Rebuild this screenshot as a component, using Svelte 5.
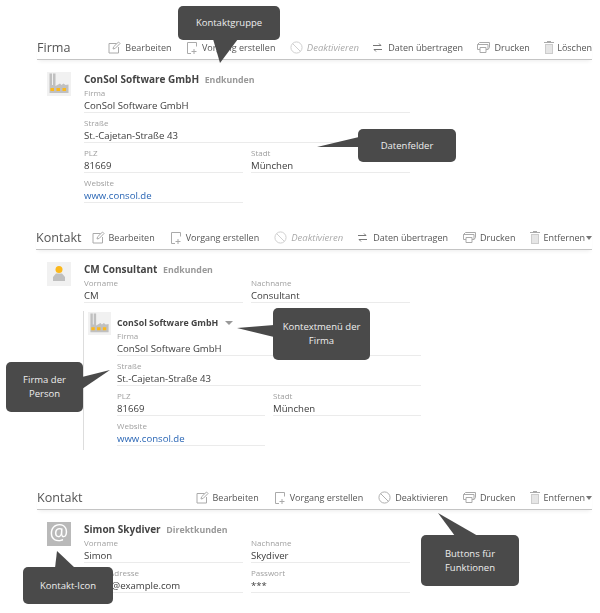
<script lang="ts">
  const callouts = [
    { text: "Kontaktgruppe", x: 178, y: 6, w: 102, h: 34, tip: "35,33 60,33 42,57" },
    { text: "Datenfelder", x: 358, y: 129, w: 98, h: 33, tip: "1,8 1,18 -41,18" },
    { text: "Kontextmenü der Firma", x: 273, y: 308, w: 97, h: 52, tip: "1,17 1,29 -36,20" },
    { text: "Firma der Person", x: 6, y: 362, w: 77, h: 50, tip: "76,15 76,27 104,8" },
    { text: "Kontakt-Icon", x: 23, y: 567, w: 90, h: 37, tip: "32,1 52,1 34,-16" },
    { text: "Buttons für Funktionen", x: 421, y: 535, w: 98, h: 51, tip: "34,1 57,1 17,-22" },
  ];
</script>

{#snippet edit()}
  <svg class="ico" width="13" height="13" viewBox="0 0 13 13"><path d="M8.500 2.500H1v9.500h9.500V6M5 8l.6-2.200L10.500 1 12 2.500 7.200 7.400z" /></svg>
{/snippet}
{#snippet create()}
  <svg class="ico tight" width="13" height="14" viewBox="0 0 13 14"><path d="M5 12.500H1.500V1.500h9v4M8 8v5M5.500 10.500h5" /></svg>
{/snippet}
{#snippet ban()}
  <svg class="ico" width="13" height="13" viewBox="0 0 14 14"><circle cx="7" cy="7" r="6" /><path d="M2.800 2.800l8.400 8.400" /></svg>
{/snippet}
{#snippet transfer()}
  <svg class="ico dark" width="9" height="9" viewBox="0 0 9 9"><path d="M0 2.500h8M6 .5l2 2M9 6.500H1M3 8.500l-2-2" /></svg>
{/snippet}
{#snippet print()}
  <svg class="ico" width="13" height="11" viewBox="0 0 13 11"><path d="M3 7.500H.5v-5L2.500.5h10v5L11 7.500H9M.5 2.500h10.500v5M3 5.500h6v5H3z" /></svg>
{/snippet}
{#snippet trash()}
  <svg class="ico tight" width="10" height="13" viewBox="0 0 10 13"><path class="fill" d="M1 3h8v10H1z" /><path d="M0 1.500h10M3 .5h4" /><path class="cut" d="M3 4v8M5 4v8M7 4v8" /></svg>
{/snippet}
{#snippet factory(size)}
  <svg class="avatar" width={size} height={size} viewBox="0 0 24 24">
    <rect width="24" height="24" fill="#f1f1f1" />
    <path fill="#c0c0c0" d="M2.500 1.500H5V13h1V1.500h2.500V14l4.500-2.500 1.500 1.500 2-1.500 2 1.500 3-.5V21h-19z" />
    <path fill="#fbb81c" d="M3.500 16H7v3H3.500zM9.500 16H13v3H9.500zM15.500 16H19v3h-3.500z" />
  </svg>
{/snippet}

<main>
  <section class="first">
    <header>
      <h2>Firma</h2>
      <nav>
        <span>{@render edit()}<b>Bearbeiten</b></span>
        <span>{@render create()}<b>Vorgang erstellen</b></span>
        <span class="off">{@render ban()}<b>Deaktivieren</b></span>
        <span>{@render transfer()}<b>Daten übertragen</b></span>
        <span>{@render print()}<b>Drucken</b></span>
        <span>{@render trash()}<b>Löschen</b></span>
      </nav>
    </header>
    <div class="record">
      {@render factory(24)}
      <div class="fields">
        <p class="name">ConSol Software GmbH <em>Endkunden</em></p>
        <label class="wide">Firma<output>ConSol Software GmbH</output></label>
        <label class="wide">Straße<output>St.-Cajetan-Straße 43</output></label>
        <label>PLZ<output>81669</output></label>
        <label>Stadt<output>München</output></label>
        <label>Website<output class="link">www.consol.de</output></label>
      </div>
    </div>
  </section>

  <section class="second">
    <header>
      <h2>Kontakt</h2>
      <nav>
        <span>{@render edit()}<b>Bearbeiten</b></span>
        <span>{@render create()}<b>Vorgang erstellen</b></span>
        <span class="off">{@render ban()}<b>Deaktivieren</b></span>
        <span>{@render transfer()}<b>Daten übertragen</b></span>
        <span>{@render print()}<b>Drucken</b></span>
        <span>{@render trash()}<b>Entfernen</b><i class="caret"></i></span>
      </nav>
    </header>
    <div class="record">
      <svg class="avatar" width="24" height="24" viewBox="0 0 24 24">
        <rect width="24" height="24" fill="#f1f1f1" />
        <circle cx="12" cy="7.500" r="3.500" fill="#fbb81c" />
        <path fill="#bfbfbf" d="M9 11.500h6l3 3.500v4H6v-4z" />
      </svg>
      <div class="fields">
        <p class="name">CM Consultant <em>Endkunden</em></p>
        <label>Vorname<output>CM</output></label>
        <label>Nachname<output>Consultant</output></label>
      </div>
    </div>
    <div class="nested">
      {@render factory(23)}
      <div class="fields inner">
        <p class="name small">ConSol Software GmbH <i class="caret big"></i></p>
        <label class="wide">Firma<output>ConSol Software GmbH</output></label>
        <label class="wide">Straße<output>St.-Cajetan-Straße 43</output></label>
        <label>PLZ<output>81669</output></label>
        <label>Stadt<output>München</output></label>
        <label>Website<output class="link">www.consol.de</output></label>
      </div>
    </div>
  </section>

  <section class="third">
    <header>
      <h2>Kontakt</h2>
      <nav>
        <span>{@render edit()}<b>Bearbeiten</b></span>
        <span>{@render create()}<b>Vorgang erstellen</b></span>
        <span>{@render ban()}<b>Deaktivieren</b></span>
        <span>{@render print()}<b>Drucken</b></span>
        <span>{@render trash()}<b>Entfernen</b><i class="caret"></i></span>
      </nav>
    </header>
    <div class="record">
      <svg class="avatar" width="24" height="24" viewBox="0 0 24 24">
        <rect width="24" height="24" fill="#b9b9b9" />
        <text x="12" y="18" text-anchor="middle" font-size="21" fill="#fff" font-family="Open Sans, sans-serif">@</text>
      </svg>
      <div class="fields">
        <p class="name">Simon Skydiver <em>Direktkunden</em></p>
        <label>Vorname<output>Simon</output></label>
        <label>Nachname<output>Skydiver</output></label>
        <label>E-Mail-Adresse<output>simon@example.com</output></label>
        <label>Passwort<output>***</output></label>
      </div>
    </div>
  </section>

  {#each callouts as c}
    <div class="callout" style="left:{c.x}px;top:{c.y}px;width:{c.w}px;height:{c.h}px">
      <svg class="tail" width="1" height="1"><polygon points={c.tip} /></svg>
      <span>{c.text}</span>
    </div>
  {/each}
</main>

<style>
  :global(body) {
    background: #fff;
  }

  main {
    position: relative;
    height: 613px;
    overflow: hidden;
    font-family: "Open Sans", "Liberation Sans", sans-serif;
    font-size: 9px;
    color: #444;
    filter: blur(0.3px);
  }

  section {
    padding-left: 37px;
    width: 555px;
  }

  .first {
    padding-top: 36px;
  }

  .first nav {
    gap: 14.400px;
  }

  .second {
    margin-top: 19px;
  }

  .second header {
    margin-left: -1px;
    width: 556px;
  }

  .third {
    margin-top: 36px;
  }

  header {
    display: flex;
    align-items: center;
    justify-content: space-between;
    height: 23px;
    border-bottom: 1px solid #c4c4c4;
    box-shadow: 0 3px 4px -2px rgba(0, 0, 0, 0.08);
  }

  h2 {
    margin: 0;
    font-size: 12.600px;
    font-weight: 400;
    color: #555;
  }

  nav {
    display: flex;
    gap: 15px;
  }

  nav span {
    display: flex;
    align-items: center;
    gap: 4px;
    white-space: nowrap;
  }

  nav b {
    font-weight: 400;
    color: #555;
  }

  .off b {
    font-size: 9.500px;
    font-style: italic;
    color: #aaa;
  }

  .off .ico {
    stroke: #ccc;
  }

  .ico {
    fill: none;
    stroke: #aaa;
    stroke-width: 1;
  }

  .ico.tight {
    margin-right: -1px;
  }

  .ico.dark {
    stroke: #777;
    margin-right: 2px;
  }

  .ico .fill {
    fill: #ccc;
    stroke: none;
  }

  .ico .cut {
    stroke: #fff;
  }

  .caret {
    display: inline-block;
    margin-left: -3px;
    border: 3px solid transparent;
    border-top: 4px solid #777;
    border-bottom: 0;
  }

  .caret.big {
    margin-left: 4px;
    border-width: 4px 4px 0;
    border-top-color: #999;
    vertical-align: 1px;
  }

  .record {
    display: flex;
    gap: 13px;
    padding: 12px 0 0 10px;
  }

  .avatar {
    flex: none;
    display: block;
  }

  .fields {
    display: grid;
    grid-template-columns: 159px 159px;
    column-gap: 8px;
    align-content: start;
  }

  .name {
    grid-column: 1 / -1;
    margin: 1px 0 0;
    height: 14px;
    line-height: 13px;
    font-size: 10px;
    font-weight: 700;
    color: #444;
  }

  .name em {
    margin-left: 3px;
    font-style: normal;
    font-size: 8.800px;
    color: #999;
  }

  .name.small {
    font-size: 8.800px;
  }

  label {
    display: block;
    height: 30px;
    font-size: 8px;
    line-height: 11px;
    color: #a0a0a0;
  }

  .wide {
    grid-column: 1 / -1;
  }

  output {
    display: block;
    height: 14px;
    border-bottom: 1px solid #ebebeb;
    font-size: 9.600px;
    line-height: 15px;
    color: #3c3c3c;
  }

  .link {
    color: #2a66b5;
  }

  .nested {
    display: flex;
    gap: 6px;
    margin: 4px 0 0 46px;
    padding: 1px 0 4px 4px;
    border-left: 1px solid #ddd;
    height: 134px;
  }

  .inner {
    grid-template-columns: 148px 148px;
    column-gap: 8px;
  }

  .inner .name {
    margin-top: 5px;
    height: 13px;
  }

  .callout {
    position: absolute;
    display: flex;
    align-items: center;
    justify-content: center;
    padding: 0 6px;
    box-sizing: border-box;
    border-radius: 5px;
    background: #4a4a4a;
    color: #eee;
    font-size: 9.500px;
    line-height: 14px;
    text-align: center;
  }

  .tail {
    position: absolute;
    left: 0;
    top: 0;
    overflow: visible;
    fill: #4a4a4a;
  }
</style>
